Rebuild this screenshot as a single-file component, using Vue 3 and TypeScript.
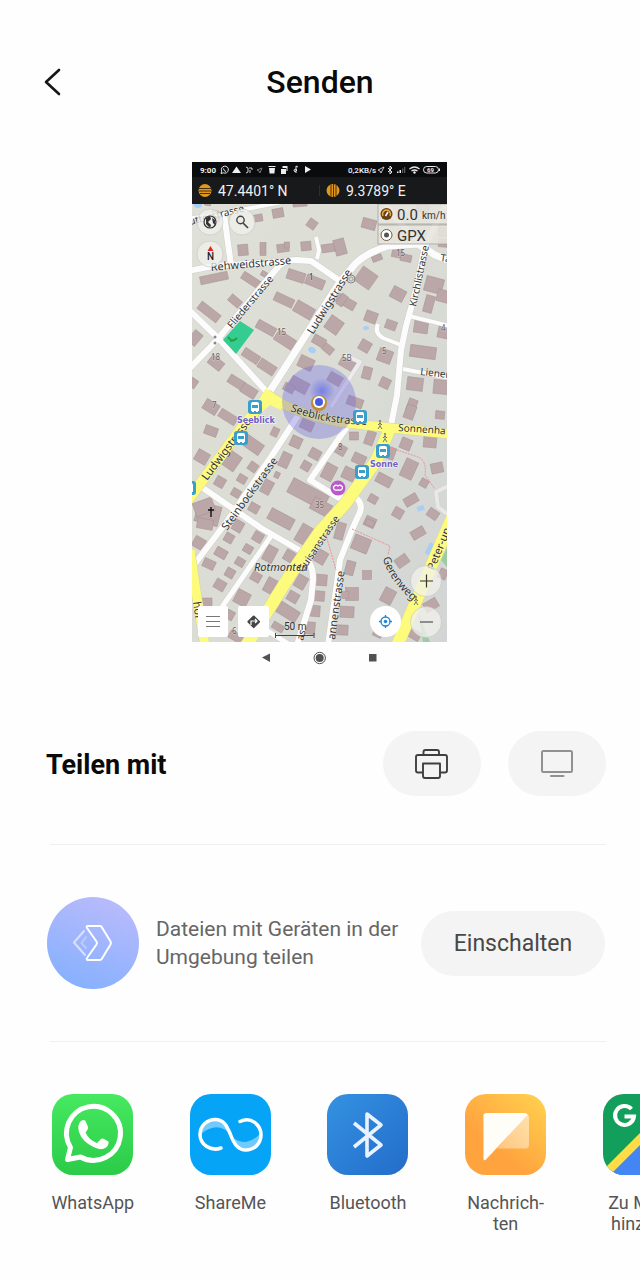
<script setup lang="ts">
interface Road { d: string; w: number; c?: string }
interface Label { t: string; x: number; y: number; r: number; s: number; c?: string }

const apps = [
  { id: 'whatsapp', lines: ['WhatsApp'] },
  { id: 'shareme', lines: ['ShareMe'] },
  { id: 'bluetooth', lines: ['Bluetooth'] },
  { id: 'messages', lines: ['Nachrich-', 'ten'] },
  { id: 'maps', lines: ['Zu Maps', 'hinzufü-'] },
]

// centre x, centre y, width, height, rotation
const buildings: number[][] = [
  [278, 213, 11, 9, -10], [312, 224, 9, 9, 35], [369, 224, 14, 10, 15], [300, 204, 14, 5, -5], [258, 218, 9, 7, -10],
  [243, 250, 10, 11, -5], [263, 249, 6, 13, 0], [283, 248, 12, 8, -8], [287, 245, 5, 6, 0], [306, 246, 10, 9, -5],
  [329, 248, 15, 8, -8], [340, 247, 11, 16, -15], [214, 278, 28, 8, -12], [251, 280, 20, 8, 33], [264, 274, 6, 5, 30],
  [296, 276, 18, 10, 18], [315, 282, 19, 10, 22], [377, 258, 10, 6, -20], [397, 253, 10, 9, 12], [406, 258, 11, 7, 12],
  [366, 278, 18, 17, 35], [423, 208, 12, 10, 30], [443, 232, 9, 9, 5], [443, 243, 9, 8, 5], [208, 202, 6, 7, 10],
  [216, 216, 9, 10, 10], [209, 312, 24, 9, 38], [235, 301, 13, 8, 40], [284, 300, 20, 9, 25], [304, 310, 20, 12, 30],
  [266, 328, 20, 9, 29], [285, 340, 21, 11, 33], [251, 356, 18, 9, 33], [267, 367, 18, 10, 33], [236, 382, 16, 9, 32],
  [249, 391, 16, 10, 32], [211, 407, 15, 11, 32], [228, 417, 19, 9, 32], [195, 338, 10, 14, 40], [216, 363, 15, 10, 38],
  [193, 383, 8, 9, 35], [346, 302, 20, 9, 30], [342, 300, 7, 12, 35], [334, 325, 15, 15, 35], [371, 317, 12, 11, 20],
  [391, 325, 11, 9, 20], [398, 294, 14, 12, 28], [434, 285, 18, 15, 15], [429, 304, 9, 17, 15], [443, 296, 12, 12, 15],
  [421, 327, 14, 12, 8], [443, 332, 10, 12, 12], [319, 341, 13, 9, 30], [328, 349, 11, 8, 40], [365, 346, 11, 11, 30],
  [385, 356, 14, 13, 20], [423, 352, 26, 12, 8], [348, 364, 17, 10, 30], [306, 363, 15, 12, 25], [335, 379, 14, 10, 30],
  [299, 385, 19, 12, 28], [289, 388, 11, 8, 28], [367, 373, 9, 12, 15], [385, 383, 10, 10, 25], [415, 384, 16, 13, 7],
  [441, 387, 15, 14, 5], [412, 405, 9, 12, 20], [355, 402, 16, 9, 20], [410, 412, 10, 14, 20], [440, 415, 9, 8, 5],
  [275, 432, 7, 9, 25], [211, 431, 13, 9, 20], [253, 445, 20, 12, 35], [202, 457, 13, 12, 30], [232, 461, 14, 17, 35],
  [253, 467, 9, 9, 35], [242, 479, 9, 8, 30], [220, 482, 10, 10, 30], [236, 493, 9, 8, 30], [285, 460, 10, 15, 25],
  [296, 442, 11, 11, 25], [315, 454, 11, 10, 28], [307, 425, 13, 10, 25], [306, 466, 9, 9, 30], [267, 487, 10, 14, 28],
  [277, 475, 5, 6, 25], [341, 450, 10, 10, 30], [329, 472, 12, 16, 28], [354, 436, 9, 8, 0], [370, 438, 9, 14, 20],
  [406, 444, 11, 11, 22], [430, 442, 13, 11, 5], [390, 453, 10, 12, 20], [359, 459, 13, 10, 25], [349, 474, 13, 12, 25],
  [409, 469, 13, 19, 25], [437, 468, 12, 10, -12], [384, 480, 16, 10, 28], [424, 483, 8, 8, 30], [373, 499, 9, 8, 30],
  [411, 500, 14, 9, -30], [308, 494, 40, 16, 28], [321, 507, 20, 13, 28], [398, 513, 10, 10, 30], [433, 514, 11, 9, 35],
  [370, 522, 11, 10, 25], [208, 514, 24, 20, 15], [204, 507, 20, 14, -20], [254, 508, 10, 9, 30], [281, 519, 26, 12, 28],
  [205, 524, 16, 10, 10], [238, 526, 10, 11, 30], [199, 543, 12, 11, 30], [229, 538, 9, 9, 30], [258, 537, 10, 10, 30],
  [305, 535, 15, 19, 30], [248, 549, 9, 8, 30], [221, 553, 12, 9, 30], [270, 554, 11, 16, 28], [240, 562, 9, 8, 30],
  [209, 564, 12, 9, 25], [230, 573, 9, 9, 30], [220, 585, 11, 10, 30], [256, 577, 10, 9, 30], [271, 586, 12, 15, 28],
  [242, 598, 14, 14, 28], [206, 603, 12, 10, 0], [230, 615, 8, 9, 30], [321, 557, 11, 13, 30], [301, 582, 11, 13, 30],
  [321, 580, 12, 11, 5], [293, 597, 11, 10, 30], [319, 596, 11, 10, 5], [315, 611, 10, 11, 5], [288, 612, 22, 12, 32],
  [310, 628, 10, 12, 5], [278, 627, 12, 7, 30], [350, 568, 9, 14, 15], [367, 575, 9, 9, 0], [352, 594, 13, 13, 0],
  [345, 595, 7, 7, 0], [347, 612, 14, 11, 3], [342, 630, 12, 10, 3], [361, 544, 17, 15, 22], [340, 531, 9, 17, 15],
  [370, 523, 9, 6, 25], [418, 533, 14, 9, -30], [402, 561, 13, 10, -35], [388, 596, 12, 15, 28], [431, 605, 14, 10, -30],
  [443, 574, 8, 10, 25], [415, 635, 11, 9, 30], [378, 633, 9, 8, 25], [236, 637, 15, 8, 30], [291, 557, 14, 11, 30],
]

const sideRoads: Road[] = [
  { d: 'M188 309 L220 340 L266 391', w: 6 },
  { d: 'M188 370 L217 340 L263 285 L279 266 Q286 260 296 260 L311 261 L340 281', w: 6 },
  { d: 'M188 271 L213 266 L260 263 L290 261', w: 6 },
  { d: 'M224 214 L231 265', w: 6 },
  { d: 'M188 219 L225 213 L288 201', w: 4 },
  { d: 'M316 237 L319 250 L317 259', w: 4 },
  { d: 'M270 391 L311 327 L340 282 L356 263 Q368 252 388 246 L418 244 L435 255 L450 261', w: 7 },
  { d: 'M384 202 L396 219 L423 245', w: 6 },
  { d: 'M447 201 L425 246 L416 290 L406 326 L401 350 L397 395 L390 430', w: 6 },
  { d: 'M409 316 L450 326', w: 4 },
  { d: 'M403 369 L450 378', w: 4 },
  { d: 'M378 324 Q374 333 383 338 L401 345', w: 4 },
  { d: 'M303 408 L271 457 L228 520 L190 570', w: 6 },
  { d: 'M200 486 L261 528 L299 550 Q314 563 313 580 L311 600 L297 645', w: 6 },
  { d: 'M271 536 L222 607', w: 5 },
  { d: 'M349 424 L310 480 L339 498 L355 497 Q363 503 360 512 L351 532 L340 560 L336 590 L328 645', w: 6 },
  { d: 'M345 355 L360 362 L331 407', w: 4, c: '#eeeaf0' },
  { d: 'M260 626 L290 645', w: 5 },
  { d: 'M450 485 L436 492 L438 507 L450 516', w: 4, c: '#e9e7e8' },
]
const mainRoads: Road[] = [
  { d: 'M268 396 L240 430 L188 500', w: 10 },
  { d: 'M267 394 Q292 413 338 422 L391 428 L450 434', w: 9 },
  { d: 'M391 426 L376 461 L345 504 L321 530 L290 575 L246 646', w: 12 },
  { d: 'M452 518 L436 555 L418 597 L396 648', w: 12 },
  { d: 'M190 550 L197 598 L205 646', w: 9 },
]
const labels: Label[] = [
  { t: 'utterstrasse', x: 190, y: 225, r: -14, s: 10 },
  { t: 'Rehweidstrasse', x: 211, y: 271, r: -5, s: 11 },
  { t: 'Fliederstrasse', x: 232, y: 329, r: -50, s: 10 },
  { t: 'Ludwigstrasse', x: 313, y: 335, r: -58, s: 11 },
  { t: 'Kirchlistrasse', x: 416, y: 307, r: -78, s: 10 },
  { t: 'Lienen', x: 420, y: 375, r: 6, s: 10 },
  { t: 'Sonnenha', x: 398, y: 431, r: 4, s: 10 },
  { t: 'Ludwigstrasse', x: 207, y: 481, r: -53, s: 11 },
  { t: 'Steinbockstrasse', x: 227, y: 531, r: -54, s: 11 },
  { t: 'Guisanstrasse', x: 303, y: 573, r: -56, s: 10 },
  { t: 'annenstrasse', x: 335, y: 640, r: -82, s: 11 },
  { t: 'Peter-un', x: 434, y: 571, r: -68, s: 11 },
  { t: 'Ta', x: 440, y: 261, r: 8, s: 10 },
  { t: 'hof', x: 193, y: 602, r: 82, s: 11 },
  { t: 'as', x: 303, y: 641, r: -75, s: 10 },
  { t: '1', x: 309, y: 280, r: 0, s: 8 },
  { t: '15', x: 277, y: 335, r: 0, s: 8, c: '#665d60' },
  { t: '15', x: 396, y: 256, r: 0, s: 8, c: '#665d60' },
  { t: '18', x: 211, y: 360, r: 0, s: 8, c: '#665d60' },
  { t: '5B', x: 342, y: 361, r: 0, s: 8, c: '#665d60' },
  { t: '5', x: 382, y: 354, r: 0, s: 8, c: '#665d60' },
  { t: '7', x: 212, y: 408, r: 0, s: 8, c: '#665d60' },
  { t: '8', x: 338, y: 450, r: 0, s: 8, c: '#665d60' },
  { t: '35', x: 315, y: 508, r: 0, s: 8, c: '#665d60' },
  { t: '6', x: 232, y: 634, r: 0, s: 8, c: '#665d60' },
  { t: '4', x: 441, y: 331, r: 0, s: 8, c: '#665d60' },
]
const stops: number[][] = [[255, 407], [241, 438], [360, 417], [383, 451], [362, 472], [189, 488]]
const walkers: number[][] = [[380, 425], [385, 438], [416, 601]]
</script>

<template>
  <main class="page">
    <header class="top">
      <button class="back" type="button" aria-label="Zurück">
        <svg viewBox="0 0 20 30" width="20" height="30"><path d="M17 3 L4 15 L17 27" fill="none" stroke="#161616" stroke-width="2.6" stroke-linecap="round" stroke-linejoin="round" /></svg>
      </button>
      <h1>Senden</h1>
    </header>

    <figure class="preview">
      <svg viewBox="192 162 256 514" role="img" aria-label="Karte">
        <defs>
          <linearGradient id="land" x1="0" y1="0" x2="1" y2="1">
            <stop offset="0" stop-color="#dfe0d8" /><stop offset=".45" stop-color="#dbddd5" /><stop offset="1" stop-color="#d2d5d4" />
          </linearGradient>
          <radialGradient id="beam"><stop offset="0" stop-color="#4c5fe8" stop-opacity=".6" /><stop offset="1" stop-color="#4c5fe8" stop-opacity="0" /></radialGradient>
          <clipPath id="mapArea"><rect x="192" y="203" width="255" height="439" /></clipPath>
        </defs>
        <g clip-path="url(#mapArea)">
          <rect x="192" y="203" width="256" height="440" fill="url(#land)" />
          <g fill="#a9cdf5">
            <ellipse cx="198" cy="205" rx="4" ry="3" /><ellipse cx="312" cy="350" rx="4" ry="3" transform="rotate(25 312 350)" />
            <ellipse cx="366" cy="328" rx="3" ry="2" /><rect x="417" y="506" width="7" height="5" transform="rotate(-20 420 508)" />
            <rect x="427" y="543" width="6" height="12" transform="rotate(25 430 549)" />
          </g>
          <path d="M447 548 L441 560 L447 567 Z M418 612 L430 642 L423 642 Z" fill="#9dcba2" />
          <rect
            v-for="(b, i) in buildings" :key="i" class="building"
            :x="b[0] - b[2] / 2" :y="b[1] - b[3] / 2" :width="b[2]" :height="b[3]"
            :transform="`rotate(${b[4]} ${b[0]} ${b[1]})`"
          />
          <g fill="none" stroke-linejoin="round">
            <path v-for="(r, i) in sideRoads" :key="'c' + i" :d="r.d" stroke="#cfcecb" :stroke-width="r.w + 1" />
            <path v-for="(r, i) in sideRoads" :key="'s' + i" :d="r.d" :stroke="r.c ?? '#fdfcfd'" :stroke-width="r.w" />
            <path v-for="(r, i) in mainRoads" :key="'e' + i" :d="r.d" stroke="#d8d59e" :stroke-width="r.w + 1" />
            <path v-for="(r, i) in mainRoads" :key="'m' + i" :d="r.d" stroke="#fdfb7c" :stroke-width="r.w" />
            <path d="M391 448 L418 457 Q427 461 425 475 L435 489 M326 535 L336 570 M352 529 L390 546 L388 555" stroke="#ee9299" stroke-width="1" stroke-dasharray="2 1" />
          </g>
          <path d="M266 388 L283 401 L281 410 L270 405 L262 412 L256 405 Z" fill="#fdfb7c" />
          <polygon points="240,321 254,330 236,354 223,340" fill="#35cc93" />
          <path d="M228 337 Q232 343 237 338 Q234 341 230 341" fill="none" stroke="#25a43c" stroke-width="2" />
          <circle cx="319" cy="402" r="37" fill="#6f68e0" fill-opacity=".36" />
          <circle cx="322" cy="391" r="13" fill="url(#beam)" />
          <path id="seeblick" d="M290 411 Q325 425 375 425" fill="none" />
          <path id="geren" d="M383 558 Q388 580 415 603" fill="none" />
          <g class="street">
            <text font-size="11"><textPath href="#seeblick">Seeblickstrasse</textPath></text>
            <text font-size="11"><textPath href="#geren">Gerenweg</textPath></text>
            <text
              v-for="(l, i) in labels" :key="'l' + i" :font-size="l.s" :fill="l.c ?? '#333'"
              :transform="`translate(${l.x} ${l.y}) rotate(${l.r})`"
            >{{ l.t }}</text>
            <text x="254" y="571" font-size="11" font-style="italic">Rotmonten</text>
          </g>
          <circle cx="319" cy="403" r="8" fill="#c08b31" /><circle cx="319" cy="402" r="6" fill="#fff" /><circle cx="319" cy="402" r="4" fill="#465ce0" />
          <g v-for="(s, i) in stops" :key="'b' + i" :transform="`translate(${s[0]} ${s[1]})`">
            <rect x="-7" y="-7" width="14" height="14" rx="3" fill="#3a9fcb" />
            <path d="M-4 -3 Q-4 -5 -2 -5 H2 Q4 -5 4 -3 V4 H-4 Z M-3 4 h2 v1 h-2 Z M1 4 h2 v1 h-2 Z" fill="#fff" />
            <path d="M-3 -2 H3 V1 H-3 Z" fill="#3a9fcb" />
          </g>
          <g class="stop"><text x="237" y="423">Seeblick</text><text x="370" y="467">Sonne</text></g>
          <circle cx="338" cy="488" r="7.5" fill="#b85bc8" />
          <path d="M333.500 487 q2 -3 4.500 -1 q2.500 -2 4.500 1 q0 4 -4.500 3 q-4.500 1 -4.500 -3 Z" fill="none" stroke="#fff" stroke-width="1.3" />
          <g v-for="(w, i) in walkers" :key="'w' + i" :transform="`translate(${w[0]} ${w[1]})`" stroke="#77736b" fill="none">
            <circle cy="-4" r=".7" /><path d="M0 -3 V1 L-2 4 M0 1 L2 4 M-2 0 L0 -2 L2 0" />
          </g>
          <path d="M211 507 v10 M208 510 h6" stroke="#111" stroke-width="1.4" />
          <circle cx="351" cy="279" r="4" fill="none" stroke="#888" /><circle cx="351" cy="279" r="2" fill="none" stroke="#888" stroke-width=".7" />
          <g fill="#888"><circle cx="215" cy="337" r="1.5" /><circle cx="215" cy="343" r="1.5" /></g>

          <g fill="#f2f2ee" fill-opacity=".75" stroke="#bcbcb8" stroke-width=".5">
            <circle cx="210" cy="222" r="13" /><circle cx="242" cy="222" r="13" /><circle cx="210" cy="254" r="13" />
            <circle cx="426" cy="581" r="15.5" /><circle cx="426" cy="622" r="15.5" />
          </g>
          <circle cx="210" cy="222" r="6" fill="#eee" stroke="#333" stroke-width="1.2" />
          <path d="M206 218 L210 216 L211 219 L208 222 L211 225 L210 228 L206 224 Z M212 218 L215 220 L215 225 L213 223 Z" fill="#333" />
          <circle cx="240.500" cy="220" r="3.700" fill="none" stroke="#444" stroke-width="1.4" /><path d="M243 223 l5 5" stroke="#444" stroke-width="1.7" />
          <path d="M207.500 251 L210.500 246 L213.500 251 Z" fill="#e32828" />
          <text x="207" y="260" class="ui" font-size="10" font-weight="500" fill="#222">N</text>
          <g fill="#e5e4dd" fill-opacity=".86" stroke="#a3a39d" stroke-width=".8"><rect x="378" y="204" width="70" height="20" /><rect x="378" y="225" width="70" height="19" /></g>
          <circle cx="386.500" cy="214" r="6" fill="#684019" /><path d="M383 216 a4 4 0 1 1 7 0" fill="none" stroke="#f0ad39" stroke-width="1.5" /><path d="M385.500 216 L388 212" stroke="#fff" stroke-width="1.5" />
          <circle cx="386.500" cy="235" r="5.500" fill="#fff" stroke="#765b3a" /><circle cx="386.500" cy="235" r="2.500" fill="#555" />
          <g class="ui" fill="#333"><text x="397" y="220" font-size="15">0.0</text><text x="422" y="219" font-size="10">km/h</text><text x="397" y="241" font-size="15">GPX</text></g>
          <g fill="#fff"><rect x="198" y="606" width="30" height="31" rx="2" /><rect x="238" y="606" width="31" height="31" rx="2" /><circle cx="385.500" cy="621.500" r="15.500" /></g>
          <path d="M206 616.500 h14 M206 621.500 h14 M206 626.500 h14" stroke="#777" stroke-width="1.2" />
          <rect x="249" y="617" width="9.500" height="9.500" rx="1" fill="#454545" transform="rotate(45 253.700 621.700)" />
          <path d="M251 625 v-4 h6 M255 619 l2 2 l-2 2" stroke="#fff" stroke-width="1.2" fill="none" />
          <g fill="none" stroke="#1986dd" stroke-width="1.300"><circle cx="385.500" cy="621.500" r="4.500" /><path d="M385.500 615 v2.500 M385.500 625.500 v2.500 M379 621.500 h2.500 M389.500 621.500 h2.500" /></g><circle cx="385.500" cy="621.500" r="1.700" fill="#1986dd" />
          <path d="M420 581 h13 M426.500 574.500 v13 M420 622 h13" stroke="#333" stroke-width="1.2" />
          <path d="M275.500 633 v5 M275.500 635.500 h38 M314 633 v5" stroke="#444" fill="none" />
          <text x="284" y="630" class="ui" font-size="10" fill="#333">50 m</text>
        </g>

        <rect x="192" y="162" width="255" height="42" fill="#17191b" /><rect x="192" y="162" width="255" height="15" fill="#090b0c" />
        <g class="ui" fill="#f1f1f1">
          <text x="200" y="173" font-size="8" font-weight="700">9:00</text>
          <text x="348" y="173" font-size="8" font-weight="500">0,2KB/s</text>
          <text x="218" y="196" font-size="14">47.4401° N</text><text x="346" y="196" font-size="14">9.3789° E</text>
        </g>
        <g fill="none" stroke="#e8e8e8" stroke-width="1">
          <path d="M221 173.500 l.7 -2.300 a3.500 3.500 0 1 1 1.600 1.600 Z M223.500 168.500 q0 2.500 2.500 3" />
          <path d="M246 167 l2 1 v4 l-2 1 M249 168 h3 v2 M250 173 v-3" stroke-width=".9" />
          <path d="M257 170 l5 -2 l-2 5 l-1 -2 Z" stroke="#777" />
          <path d="M296 166 v7 M294 171 q0 -3 3 -1 q-2 3 -3 1 M296 166 l2 1" />
          <path d="M378 170 l6 -3 l-3 6 l-1 -2 Z" stroke-width=".8" />
          <path d="M388 168 l4 4 l-2 2 v-8 l2 2 l-4 4" />
          <path d="M409.500 169 q5 -4 10 0 M411.500 171 q3 -2 6 0" stroke-width="1.300" />
          <rect x="423.500" y="166.500" width="15" height="6.500" rx="3.200" />
        </g>
        <g fill="#eee">
          <path d="M232 173 l4.500 -6.500 l4.500 6.500 Z M269 168 h6 l-.6 5.500 h-4.800 Z M268.500 166 h7 v1 h-7 Z M281 169 h5 v5 h-5 Z M282.500 166 h5 v5 h-1 v-3 h-4 Z M305 166 l6 3.500 l-6 3.500 Z" />
          <circle cx="414.500" cy="172.500" r="1.200" /><rect x="439" y="168.500" width="1" height="2.500" />
          <text x="427" y="172" font-size="6" class="ui" font-weight="700">69</text>
          <path d="M397 173 v-1.500 h1.500 V173 Z M399.500 173 v-3 h1.500 v3 Z" />
        </g>
        <path d="M402 173 v-4.500 h1.300 v4.500 Z M404 173 v-6 h1.300 v6 Z" fill="#555" />
        <circle cx="205" cy="190.500" r="6.500" fill="#e0981e" /><path d="M199 188.500 h12 M199 191 h12 M200 193.500 h10" stroke="#4a2e0b" />
        <circle cx="333" cy="190.500" r="6.500" fill="#e0981e" /><path d="M331 184.500 v12 M333.500 184 v13 M336 185 v11" stroke="#4a2e0b" />
        <path d="M319.500 185 v11" stroke="#2c2e30" />
        <g fill="#515151"><path d="M262 657.500 L270 653.500 V662 Z" /><circle cx="319.700" cy="658" r="4" /><rect x="369" y="654" width="7.500" height="7.500" /></g>
        <circle cx="319.700" cy="658" r="5.700" fill="none" stroke="#515151" />
      </svg>
    </figure>

    <section class="share">
      <h2>Teilen mit</h2>
      <div class="targets">
        <button class="pill" type="button" aria-label="Drucken">
          <svg viewBox="0 0 36 32" width="36" height="32" fill="none" stroke="#3f3f3f" stroke-width="1.900" stroke-linejoin="round">
            <path d="M9.500 7 V4 Q9.500 2 11.500 2 H23 Q25 2 25 4 V7" />
            <path d="M9 24.500 H4 Q2 24.500 2 22.500 V9 Q2 7 4 7 H31 Q33 7 33 9 V22.500 Q33 24.500 31 24.500 H26" />
            <path d="M9 15.500 H26 V28 Q26 30 24 30 H11 Q9 30 9 28 Z" />
          </svg>
        </button>
        <button class="pill" type="button" aria-label="Übertragen">
          <svg viewBox="0 0 34 32" width="34" height="32" fill="none" stroke="#919191" stroke-width="2">
            <rect x="2" y="3" width="30" height="21" rx="1.500" /><path d="M11 28 H23.500" stroke-linecap="round" />
          </svg>
        </button>
      </div>
    </section>

    <hr>
    <section class="nearby">
      <svg class="badge" viewBox="0 0 92 92" aria-hidden="true">
        <defs><linearGradient id="orb" x1=".7" y1="0" x2=".3" y2="1"><stop offset="0" stop-color="#b9bbfc" /><stop offset="1" stop-color="#86b0fe" /></linearGradient></defs>
        <circle cx="46" cy="46" r="46" fill="url(#orb)" />
        <g fill="none" stroke="#fff" stroke-linejoin="round" stroke-linecap="round" stroke-width="2">
          <path d="M37 34 L27 45.500 L38 58" opacity=".6" /><path d="M39 40 L34.500 46 L39 51" opacity=".3" />
          <path d="M41 29 H53 Q54 29 54.700 30 L63.500 44.500 Q64.300 46 63.500 47.500 L54.700 62 Q54 63 53 63 H41 Q39 63 40 61 L49.500 47.500 Q50.500 46 49.500 44.500 L40 31 Q39 29 41 29 Z" />
        </g>
      </svg>
      <p>Dateien mit Geräten in der Umgebung teilen</p>
      <button class="pill enable" type="button">Einschalten</button>
    </section>
    <hr>

    <ul class="apps">
      <li v-for="app in apps" :key="app.id">
        <button class="app" type="button">
          <svg v-if="app.id === 'whatsapp'" viewBox="0 0 81 81">
            <defs><linearGradient id="wa" x1="0" y1="0" x2="0" y2="1"><stop offset="0" stop-color="#46e960" /><stop offset="1" stop-color="#2bcb48" /></linearGradient></defs>
            <rect width="81" height="81" rx="21" fill="url(#wa)" />
            <path d="M15.500 65.500 L18.500 53.500 A27 27 0 1 1 28.500 63 Z" fill="none" stroke="#fff" stroke-width="5" stroke-linejoin="round" />
            <path d="M29 27 Q31.500 25 33.500 27 L36 33 Q36.500 35 33.500 38.500 Q37 46 45 49 L48.500 45.500 Q50 44 52 45 L56.500 47.500 Q57 51 54 53.500 Q49 57 41.500 53 Q30 47.500 27 38 Q25 30.500 29 27 Z" fill="#fff" />
          </svg>
          <svg v-else-if="app.id === 'shareme'" viewBox="0 0 81 81">
            <rect width="81" height="81" rx="21" fill="#05a4f7" />
            <path d="M12 36 Q17 25 26 25 Q35 26 40 40 Q32 31 22 34 Q14 36 10 42 Z M69 46 Q64 57 55 57 Q47 56 41 42 Q47 48 56 48 Q66 46 71 38 Z" fill="#70cbfc" />
            <path d="M31 54 C20 58 10 50 10 40.500 C10 32 17 25.500 25 25.500 C34 25.500 37 32 40.500 40.500 C44 50 48 56 56 56 C65 56 71 49 71 41 C71 31 61 22 50 27.500" fill="none" stroke="#fff" stroke-width="3.500" stroke-linecap="round" />
          </svg>
          <svg v-else-if="app.id === 'bluetooth'" viewBox="0 0 81 81">
            <defs><linearGradient id="bt" x1="0" y1="0" x2="1" y2="1"><stop offset="0" stop-color="#3492e2" /><stop offset="1" stop-color="#236cc9" /></linearGradient></defs>
            <rect width="81" height="81" rx="21" fill="url(#bt)" />
            <path d="M27 29 L54 51 L40 62 V20 L54 31 L27 53" fill="none" stroke="#e9f2ff" stroke-width="3.600" stroke-linejoin="round" />
          </svg>
          <svg v-else-if="app.id === 'messages'" viewBox="0 0 81 81">
            <defs>
              <linearGradient id="ms" x1="1" y1="0" x2=".4" y2=".7"><stop offset="0" stop-color="#ffd34f" /><stop offset="1" stop-color="#ffa33f" /></linearGradient>
              <linearGradient id="fold" x1="0" y1="1" x2="1" y2="0"><stop offset="0" stop-color="#ffc680" /><stop offset="1" stop-color="#ffe2ac" /></linearGradient>
            </defs>
            <rect width="81" height="81" rx="21" fill="url(#ms)" />
            <path d="M62 20 Q64 21 64 23 V51 Q64 54.500 60.500 54.500 H32 Z" fill="url(#fold)" />
            <path d="M21.500 19 H60 Q62 19 62.500 21 L20.500 66 Q18.500 67 18.500 64.500 V22 Q18.500 19 21.500 19 Z" fill="#fffdf7" />
          </svg>
          <svg v-else viewBox="0 0 81 81">
            <defs><clipPath id="tile"><rect width="81" height="81" rx="21" /></clipPath></defs>
            <g clip-path="url(#tile)">
              <rect width="81" height="81" fill="#129e5b" /><path d="M0 81 L81 0 V81 Z" fill="#4485f5" /><path d="M-3 79 L79 -3 L87 1 L1 87 Z" fill="#ffdd43" />
              <path d="M28.500 15 A9.500 9.500 0 1 0 31 22.500 H21.500" fill="none" stroke="#fff" stroke-width="4" />
            </g>
          </svg>
          <span class="name"><span v-for="line in app.lines" :key="line">{{ line }}</span></span>
        </button>
      </li>
    </ul>
  </main>
</template>

<style>
body { margin: 0; background: #fefefe; }
</style>

<style scoped>
.page { min-height: 100vh; overflow: hidden; font-family: Roboto, "Noto Sans", sans-serif; color: #0a0a0a; }
button { border: 0; padding: 0; background: none; font: inherit; color: inherit; cursor: pointer; }
svg { display: block; flex: none; }
hr { height: 1px; margin: 0 34px 0 50px; border: 0; background: #f0f0f0; }
.top { display: grid; grid-template-columns: 40px 1fr 40px; align-items: center; padding: 60px 42px 0; height: 44px; }
.back { display: flex; }
h1 { margin: 0; text-align: center; font-size: 32px; line-height: 44px; font-weight: 500; }
.preview { width: 40%; margin: 58px auto 0; }
.preview svg { width: 100%; height: auto; }
.building { fill: #bba7a7; stroke: #a59193; stroke-width: 0.5; }
.street { font-family: "Noto Sans", sans-serif; fill: #333; }
.street text { stroke: #fff; stroke-opacity: 0.4; stroke-width: 1; paint-order: stroke; }
.stop { font: 700 8px "DejaVu Sans", sans-serif; fill: #6a5fc5; stroke: #fff; stroke-width: 1; paint-order: stroke; }
.ui { font-family: Roboto, sans-serif; }
.share { display: flex; align-items: center; justify-content: space-between; margin: 55px 34px 48px 46px; }
h2 { margin: 0; padding-top: 2px; font-size: 27px; line-height: 36px; font-weight: 700; }
.targets { display: flex; gap: 27px; }
.pill { display: flex; align-items: center; justify-content: center; width: 98px; height: 65px; border-radius: 33px; background: #f4f4f4; }
.nearby { display: flex; align-items: center; margin: 0 35px 0 47px; padding: 52px 0; }
.badge { width: 92px; height: 92px; }
.nearby p { flex: 1; margin: 0 12px 0 17px; font-size: 21px; line-height: 28px; color: #666; }
.nearby .enable { flex: none; width: 184px; font-size: 23px; color: #484848; }
.apps { display: grid; grid-auto-flow: column; grid-auto-columns: 21.5vw; list-style: none; margin: 0; padding: 52px 0 40px 24px; overflow-x: auto; scrollbar-width: none; }
.app { display: flex; flex-direction: column; align-items: center; width: 100%; gap: 17px; }
.app svg { width: 81px; height: 81px; }
.name { display: flex; flex-direction: column; font-size: 18px; line-height: 21px; color: #555; text-align: center; }
</style>
